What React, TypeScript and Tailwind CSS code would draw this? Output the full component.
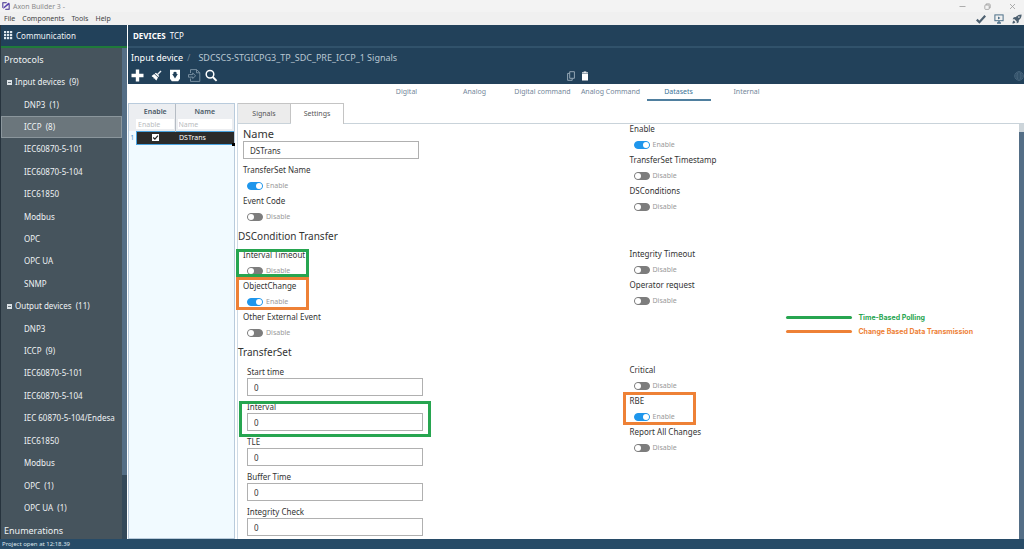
import React, { useId, useState } from "react";

type Mark = "green" | "orange";

const inputDevices = [
  "DNP3  (1)",
  "ICCP  (8)",
  "IEC60870-5-101",
  "IEC60870-5-104",
  "IEC61850",
  "Modbus",
  "OPC",
  "OPC UA",
  "SNMP",
];

const outputDevices = [
  "DNP3",
  "ICCP  (9)",
  "IEC60870-5-101",
  "IEC60870-5-104",
  "IEC 60870-5-104/Endesa",
  "IEC61850",
  "Modbus",
  "OPC  (1)",
  "OPC UA  (1)",
];

const signalTabs = ["Digital", "Analog", "Digital command", "Analog Command", "Datasets", "Internal"];

function Logo() {
  return (
    <svg viewBox="0 0 24 24" className="size-2">
      <path d="M1 1h14l-2 3H4v12l-3 3zM23 23H9l2-3h9V8l3-3z" fill="#3b2a8c" />
      <path d="M19 2l4 1-1 4L8 18l-5 2 2-5z" fill="#5a43b0" />
    </svg>
  );
}

function GridIcon() {
  return (
    <svg viewBox="0 0 9 9" className="size-[9px]" fill="#dfe8ee">
      {[0, 3, 6].map((y) => [0, 3, 6].map((x) => <rect key={`${x}-${y}`} x={x} y={y} width="2.2" height="2.2" />))}
    </svg>
  );
}

function WindowControls() {
  return (
    <div className="flex items-center gap-[18px] pr-2">
      <button type="button" aria-label="Minimize">
        <svg viewBox="0 0 7 7" className="size-[7px]" stroke="#9a9a9a" strokeWidth=".8" fill="none"><path d="M.5 3.5h6" /></svg>
      </button>
      <button type="button" aria-label="Restore">
        <svg viewBox="0 0 7 7" className="size-[7px]" stroke="#9a9a9a" strokeWidth=".8" fill="none">
          <rect x=".8" y="2" width="4.4" height="4.4" rx=".8" />
          <path d="M2.2 2V.9h3q1 0 1 1v3H5.2" />
        </svg>
      </button>
      <button type="button" aria-label="Close">
        <svg viewBox="0 0 7 7" className="size-[7px]" stroke="#9a9a9a" strokeWidth=".8" fill="none"><path d="M1 1l5 5M6 1L1 6" /></svg>
      </button>
    </div>
  );
}

function AppActions() {
  return (
    <div className="flex items-center gap-2 pr-0.5">
      <button type="button" aria-label="Validate">
        <svg viewBox="0 0 10 10" className="size-[10px]" fill="none" stroke="#4d6070" strokeWidth="2.2"><path d="M.8 5.6l2.6 2.6L9.2 1.8" /></svg>
      </button>
      <button type="button" aria-label="Run">
        <svg viewBox="0 0 10 10" className="size-[10px]" fill="none" stroke="#4d7089">
          <rect x=".9" y=".9" width="8.2" height="5.8" />
          <path d="M4 2.4v3l2.4-1.5z" fill="#4d7089" stroke="none" />
          <path d="M5 7v1.6M3 9h4" strokeWidth="1.4" />
        </svg>
      </button>
      <button type="button" aria-label="Deploy">
        <svg viewBox="0 0 10 10" className="size-[10px]" fill="#4d6070">
          <path d="M9.600 .4C7 .4 5.400 1.200 3.900 3.100L1.800 3.300.6 5.200l1.900.1 2.200 2.200.1 1.900 1.900-1.200.2-2.100C8.800 4.600 9.600 3 9.600.4zM1.800 6.600C.8 7 .6 8.200.4 9.600 1.800 9.400 3 9.200 3.400 8.200z" />
          <circle cx="6.900" cy="3.100" r=".8" fill="#f0f0f0" />
        </svg>
      </button>
    </div>
  );
}

function Toolbar() {
  return (
    <div className="flex h-[17px] items-center pl-[3px]">
      <div className="flex flex-1 items-center gap-1.5">
        <button type="button" aria-label="Add">
          <svg viewBox="0 0 13 13" className="size-[13px]" fill="#fff"><path d="M4.800 .5h3.400v4.300h4.300v3.400H8.200v4.300H4.800V8.200H.5V4.800h4.300z" /></svg>
        </button>
        <button type="button" aria-label="Clean">
          <svg viewBox="0 0 13 13" className="size-[13px]">
            <path d="M11 2L7.500 5.500" stroke="#eaf0f4" strokeWidth="1.400" />
            <path d="M6 3.800l3.200 3.200-.8 1-3.700-3.500zM4.200 5l3.800 3.600-1.600 2.900-1.200-1-.2-1-.8.300-.9-.9.200-.9-1 .1L1.600 7z" fill="#fff" />
          </svg>
        </button>
        <button type="button" aria-label="Import">
          <svg viewBox="0 0 13 13" className="size-[13px]">
            <path d="M1 .8h10v9l-1.800 2.400H2.800L1 9.800z" fill="#fff" />
            <path d="M6 2.800c1.500 0 2 1 1.500 2.100h1.300L6 9.400 3.200 4.900h1.300C4 3.800 4.500 2.800 6 2.800z" fill="#22415a" />
          </svg>
        </button>
        <button type="button" aria-label="Export">
          <svg viewBox="0 0 13 13" className="size-[13px]" fill="none" stroke="#7f95a6" strokeWidth=".9">
            <path d="M2.500 4V.6h6l3.300 3v8.800H2.500V9.500M8.500.6v3.200H12" />
            <path d="M.5 8.200V5.600h4.200V4L7.600 6.800 4.700 9.500V8z" />
          </svg>
        </button>
        <button type="button" aria-label="Search" className="-ml-0.5">
          <svg viewBox="0 0 13 13" className="size-[13px]" fill="none" stroke="#fff"><circle cx="5" cy="5.200" r="3.800" strokeWidth="1.500" /><path d="M7.800 8l3.800 3.800" strokeWidth="1.900" /></svg>
        </button>
      </div>
      <div className="flex items-center gap-1.5">
        <button type="button" aria-label="Copy">
          <svg viewBox="0 0 8 10" className="h-[10px] w-2" fill="none" stroke="#9fb0bd" strokeWidth=".9"><path d="M2.700 .7h4.700v6.600H2.700zM2.500 2.400H.6v6.900h4.600V7.500" /></svg>
        </button>
        <button type="button" aria-label="Paste">
          <svg viewBox="0 0 8 10" className="h-[10px] w-2" fill="#fff"><path d="M1 1.200h1.700V.4h2.600v.8H7v8.400H1z" /><path d="M1 2.300h6" stroke="#22415a" strokeWidth=".6" /></svg>
        </button>
      </div>
      <div className="flex flex-1 justify-end">
        <button type="button" aria-label="Language">
          <svg viewBox="0 0 10 10" className="size-[10px]" fill="none" stroke="#4d6a80" strokeWidth=".8">
            <circle cx="5" cy="5" r="4.300" /><ellipse cx="5" cy="5" rx="2" ry="4.300" /><path d="M.7 5h8.600M1.300 3h7.400M1.300 7h7.400" />
          </svg>
        </button>
      </div>
    </div>
  );
}

function TreeGroup({ title, items, selected }: { title: string; items: string[]; selected?: number }) {
  return (
    <>
      <li className="flex flex-1 items-center gap-[3px] pl-1.5">
        <svg viewBox="0 0 5 5" className="size-[5px]"><rect width="5" height="5" fill="#dbe2e6" /><path d="M1 2.500h3" stroke="#47555f" strokeWidth=".8" /></svg>
        {title}
      </li>
      {items.map((item, i) => (
        <li key={item} className="flex flex-1">
          <a
            href="#"
            className={
              i === selected
                ? "flex flex-1 items-center border border-[#8b969c] bg-[#6b767c] pl-[22px]"
                : "flex flex-1 items-center pl-[23px]"
            }
          >
            {item}
          </a>
        </li>
      ))}
    </>
  );
}

function Sidebar() {
  return (
    <aside className="flex w-[127px] shrink-0 flex-col border-l border-[#26333d] bg-[#46545d] text-[#eef2f4]">
      <h1 className="flex h-[23px] items-center gap-[3px] border-b-2 border-[#1f7a3a] bg-[#22415a] pl-[3px] text-[8px]">
        <GridIcon />
        Communication
      </h1>
      <div className="flex min-h-0 flex-1">
        <nav className="flex flex-1 flex-col">
          <h2 className="flex h-[23px] items-center pl-[3px] text-[9px]">Protocols</h2>
          <ul className="flex flex-1 flex-col text-[8px] whitespace-pre">
            <TreeGroup title="Input devices  (9)" items={inputDevices} selected={1} />
            <TreeGroup title="Output devices  (11)" items={outputDevices} />
          </ul>
          <h2 className="flex h-5 items-center pl-[3px] pt-0.5 text-[9px]">Enumerations</h2>
        </nav>
        <div className="flex w-[5px] flex-col bg-[#34495a]">
          <div className="h-[87%] bg-[#546e86]" />
        </div>
      </div>
    </aside>
  );
}

function DatasetTable() {
  return (
    <div className="w-[107px] shrink-0 border border-[#b9cbdc] bg-[#f1faff]">
      <table className="w-full table-fixed border-collapse text-[7px]">
        <colgroup>
          <col className="w-[7px]" />
          <col className="w-[39px]" />
          <col />
        </colgroup>
        <thead className="bg-[#eceef1] text-[#4b5a68]">
          <tr className="h-[15px]">
            <th />
            <th className="p-0 font-semibold">Enable</th>
            <th className="border-l border-[#b5bcc4] p-0 font-semibold">Name</th>
          </tr>
          <tr className="h-3 align-top">
            <td />
            <td className="p-0 pr-px">
              <input aria-label="Filter by enable" placeholder="Enable" className="block h-2.5 w-full bg-white px-0.5 placeholder:text-[#b9bcc0]" />
            </td>
            <td className="border-l border-[#b5bcc4] p-0 px-0.5">
              <input aria-label="Filter by name" placeholder="Name" className="block h-2.5 w-full bg-white px-px placeholder:text-[#b9bcc0]" />
            </td>
          </tr>
        </thead>
        <tbody>
          <tr className="h-[13px] text-white">
            <td className="p-0 text-center text-[#4a90c8]">1</td>
            <td className="border-y border-l border-[#4aa3e0] bg-[#2b2b2b] p-0">
              <label className="relative mx-auto block size-[7px]">
                <input type="checkbox" defaultChecked aria-label="DSTrans enabled" className="peer block size-[7px] appearance-none bg-white" />
                <svg viewBox="0 0 7 7" className="absolute inset-0 hidden size-[7px] peer-checked:block" fill="none" stroke="#222" strokeWidth="1.200">
                  <path d="M1.200 3.500l1.700 1.700L5.900 1.600" />
                </svg>
              </label>
            </td>
            <td className="relative border-y border-[#4aa3e0] bg-[#2b2b2b] p-0 pl-1">
              DSTrans
              <span className="absolute -right-px -bottom-0.5 size-[3px] bg-black" />
            </td>
          </tr>
        </tbody>
      </table>
    </div>
  );
}

function ToggleField({ label, on = false, mark }: { label: string; on?: boolean; mark?: Mark }) {
  const id = useId();
  const [checked, setChecked] = useState(on);
  return (
    <div className="relative">
      <label htmlFor={id} className="flex h-4 items-center text-[8px]">{label}</label>
      <div className="flex h-[15px] items-center gap-[3px] pl-1 text-[7px] text-[#999]">
        <input
          id={id}
          type="checkbox"
          role="switch"
          checked={checked}
          onChange={(e) => setChecked(e.target.checked)}
          className="flex h-2 w-4 appearance-none items-center rounded-full border border-[#7d7d7d] bg-[#7d7d7d] before:block before:size-1.5 before:rounded-full before:bg-white checked:justify-end checked:border-[#1e96ec] checked:bg-[#1e96ec]"
        />
        <span>{checked ? "Enable" : "Disable"}</span>
      </div>
      {mark === "green" && <div className="pointer-events-none absolute top-0.5 -left-[7px] h-7 w-[73px] border-3 border-[#27a550]" />}
      {mark === "orange" && <div className="pointer-events-none absolute -top-px -left-[7px] h-[33px] w-[73px] border-3 border-[#ee8136]" />}
    </div>
  );
}

function NumberField({ label, marked = false }: { label: string; marked?: boolean }) {
  const id = useId();
  return (
    <div className="relative mb-[5px]">
      <label htmlFor={id} className="flex h-3 items-center text-[8px]">{label}</label>
      <input id={id} defaultValue="0" className="block h-[18px] w-44 border border-[#b0b0b0] bg-white px-1.5 text-[8px]" />
      {marked && <div className="pointer-events-none absolute top-0 -left-2 h-9 w-48 border-3 border-[#27a550]" />}
    </div>
  );
}

function Legend() {
  return (
    <ul className="absolute top-[66px] right-[46px] flex flex-col gap-px font-['Inter',sans-serif] text-[7px] font-bold">
      <li className="flex h-[13px] items-center gap-1.5 text-[#27a550]">
        <span className="h-[3px] w-[66px] rounded-full bg-[#27a550]" />
        Time-Based Polling
      </li>
      <li className="flex h-[13px] items-center gap-1.5 text-[#ee8136]">
        <span className="h-[3px] w-[66px] rounded-full bg-[#ee8136]" />
        Change Based Data Transmission
      </li>
    </ul>
  );
}

function SettingsForm() {
  return (
    <form className="min-w-0 flex-1 text-[#333]">
      <section className="grid grid-cols-2">
        <div className="pt-0.5 pl-[5px]">
          <label htmlFor="dataset-name" className="flex h-[15px] items-center text-[11px]">Name</label>
          <input id="dataset-name" defaultValue="DSTrans" className="mb-[3px] block h-[18px] w-44 border border-[#b0b0b0] bg-white px-1.5 text-[8px]" />
          <ToggleField label="TransferSet Name" on />
          <ToggleField label="Event Code" />
        </div>
        <div className="-mt-[3px] pl-px">
          <ToggleField label="Enable" on />
          <ToggleField label="TransferSet Timestamp" />
          <ToggleField label="DSConditions" />
        </div>
      </section>
      <h3 className="mt-[3px] flex h-[18px] items-center text-[10px]">DSCondition Transfer</h3>
      <section className="relative grid grid-cols-2">
        <div className="pt-0.5 pl-[5px]">
          <ToggleField label="Interval Timeout" mark="green" />
          <ToggleField label="ObjectChange" on mark="orange" />
          <ToggleField label="Other External Event" />
        </div>
        <div className="pt-px pl-px">
          <ToggleField label="Integrity Timeout" />
          <ToggleField label="Operator request" />
        </div>
        <Legend />
      </section>
      <h3 className="mt-[3px] flex h-[18px] items-center text-[10px]">TransferSet</h3>
      <section className="grid grid-cols-2">
        <div className="pt-[5px] pl-[9px]">
          <NumberField label="Start time" />
          <NumberField label="Interval" marked />
          <NumberField label="TLE" />
          <NumberField label="Buffer Time" />
          <NumberField label="Integrity Check" />
        </div>
        <div className="pt-px pl-px">
          <ToggleField label="Critical" />
          <ToggleField label="RBE" on mark="orange" />
          <ToggleField label="Report All Changes" />
        </div>
      </section>
    </form>
  );
}

export default function App() {
  return (
    <div className="flex h-screen flex-col overflow-hidden bg-white font-['Noto_Sans','Open_Sans',sans-serif] leading-none">
      <div className="flex h-3 shrink-0 items-center justify-between bg-[#f3f3f3] pl-0.5 text-[7px] text-[#8a8a8a]">
        <div className="flex items-center gap-[3px]">
          <Logo />
          Axon Builder 3 -
        </div>
        <WindowControls />
      </div>
      <div className="flex h-[13px] shrink-0 items-center justify-between bg-[#f0f0f0] pl-1 text-[7px] text-[#444]">
        <nav className="flex gap-[7px]">
          <button type="button">File</button>
          <button type="button">Components</button>
          <button type="button">Tools</button>
          <button type="button">Help</button>
        </nav>
        <AppActions />
      </div>

      <div className="flex min-h-0 flex-1 gap-px">
        <Sidebar />
        <main className="flex min-w-0 flex-1 flex-col">
          <header className="shrink-0 bg-[#22415a] text-white">
            <nav className="flex h-[23px] items-center gap-1 border-b-2 border-[#31526b] pl-[5px] text-[8px]">
              <a href="#" className="font-bold">DEVICES</a>
              <a href="#">TCP</a>
            </nav>
            <div className="flex h-[19px] items-center gap-1 pl-[3px] text-[9px]">
              <a href="#">Input device</a>
              <span className="text-[#6d8496]">/</span>
              <span className="pl-1 text-[#b9c7d2]">SDCSCS-STGICPG3_TP_SDC_PRE_ICCP_1 Signals</span>
            </div>
            <Toolbar />
          </header>

          <nav className="flex h-[19px] shrink-0 justify-center pl-px text-[7px] text-[#74879a]">
            {signalTabs.map((tab) => (
              <a
                key={tab}
                href="#"
                className={
                  tab === "Datasets"
                    ? "mx-0.5 flex h-[17px] w-16 items-center justify-center border-b-2 border-[#4f7f9f] text-[#3a7398]"
                    : "flex h-[17px] w-[68px] items-center justify-center pb-0.5 whitespace-nowrap"
                }
              >
                {tab}
              </a>
            ))}
          </nav>

          <div className="flex min-h-0 flex-1">
            <DatasetTable />
            <div className="ml-0.5 flex min-w-0 flex-1 flex-col border-l border-[#cfdbe6]">
              <div className="flex h-[21px] shrink-0 border-b border-[#c9d3da] text-[7px] text-[#555]" role="tablist">
                <button type="button" role="tab" aria-selected="false" className="w-[53px] border-t border-r border-[#c4c4c4] bg-[#ececec]">Signals</button>
                <button type="button" role="tab" aria-selected="true" className="-mb-px w-[53px] border-t border-r border-[#c4c4c4] bg-white pb-px">Settings</button>
              </div>
              <div className="flex min-h-0 flex-1">
                <SettingsForm />
                <div className="w-[5px] shrink-0 bg-[#546e86]">
                  <div className="h-2 bg-[#cdd5da]" />
                </div>
              </div>
            </div>
          </div>
        </main>
      </div>

      <footer className="flex h-[10px] shrink-0 items-center bg-[#274b67] pl-0.5 text-[6px] text-[#dde6ec]">Project open at 12:18.39</footer>
    </div>
  );
}
